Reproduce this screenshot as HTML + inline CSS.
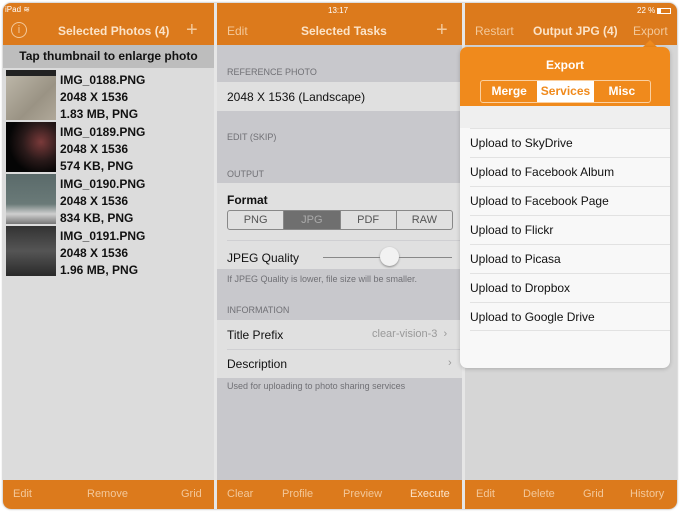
<!DOCTYPE html>
<html><head><meta charset="utf-8"><style>
*{margin:0;padding:0;box-sizing:border-box}
body{width:680px;height:512px;background:#fff;font-family:"Liberation Sans",Arial,sans-serif;position:relative;overflow:hidden}
.a{position:absolute}
.screen{left:3px;top:3px;width:674px;height:506px;border-radius:8px;overflow:hidden;background:#c8c8cc;box-shadow:0 0 2px #999}
.hdr{background:#dc7a1c;color:#fff}
.w{color:#f3c89a}
.t{font-size:12px;white-space:nowrap}
.sec{font-size:9px;color:#707075}
.cell{background:#e0e0e0}
.sep{height:1px;background:#cfcfd2}
.row{font-size:12px;color:#111;left:10px}
</style></head><body>
<div class="a screen">
 <div class="a" style="left:0;top:0;width:211px;height:506px;background:#dcdcdc"></div>
 <div class="a hdr" style="left:0;top:0;width:211px;height:42px"></div>
 <div class="a" style="left:211px;top:0;width:3px;height:506px;background:#e6e6e6"></div>
 <div class="a" style="left:459px;top:0;width:3px;height:506px;background:#e6e6e6"></div>
 <div class="a t" style="left:2px;top:2px;font-size:8px;color:#fff">iPad ︎≋</div>
 <div class="a" style="left:8px;top:19px;width:16px;height:16px;border:1px solid #f3c89a;border-radius:50%;color:#f3c89a;font-size:11px;text-align:center;line-height:14px">i</div>
 <div class="a t" style="left:55px;top:21px;font-weight:bold;color:#fbe3c8">Selected Photos (4)</div>
 <div class="a" style="left:183px;top:16px;color:#f3c89a;font-size:20px;font-weight:300">+</div>
 <div class="a" style="left:0;top:42px;width:211px;height:23px;background:#bdbdbd;font-size:12px;font-weight:bold;text-align:center;line-height:23px;color:#111">Tap thumbnail to enlarge photo</div>
 <div class="a" style="left:3px;top:67px;width:50px;height:50px;background:linear-gradient(135deg,#bcb6a8,#9a9384 60%,#b0a899);border-top:6px solid #222"></div>
 <div class="a" style="left:3px;top:119px;width:50px;height:50px;background:radial-gradient(circle at 70% 40%,#7a3a3a,#2a1a1a 40%,#050505 70%)"></div>
 <div class="a" style="left:3px;top:171px;width:50px;height:50px;background:linear-gradient(#5a6a6a,#6a7a78 60%,#cfcfcf 80%,#777)"></div>
 <div class="a" style="left:3px;top:223px;width:50px;height:50px;background:linear-gradient(#333,#555 50%,#2a2a2a)"></div>
 <div class="a" style="left:57px;top:69px;font-size:12px;font-weight:bold;line-height:17px;color:#111">
  <div style="height:52px">IMG_0188.PNG<br>2048 X 1536<br>1.83 MB, PNG</div>
  <div style="height:52px">IMG_0189.PNG<br>2048 X 1536<br>574 KB, PNG</div>
  <div style="height:52px">IMG_0190.PNG<br>2048 X 1536<br>834 KB, PNG</div>
  <div style="height:52px">IMG_0191.PNG<br>2048 X 1536<br>1.96 MB, PNG</div>
 </div>
 <div class="a hdr" style="left:0;top:477px;width:211px;height:29px"></div>
 <div class="a t w" style="left:10px;top:485px;font-size:11px">Edit</div>
 <div class="a t w" style="left:84px;top:485px;font-size:11px">Remove</div>
 <div class="a t w" style="left:178px;top:485px;font-size:11px">Grid</div>

 <div class="a hdr" style="left:214px;top:0;width:245px;height:42px"></div>
 <div class="a t" style="left:325px;top:3px;font-size:8px;color:#fff">13:17</div>
 <div class="a t w" style="left:224px;top:21px">Edit</div>
 <div class="a t" style="left:298px;top:21px;font-weight:bold;color:#fbe3c8">Selected Tasks</div>
 <div class="a" style="left:433px;top:16px;color:#f3c89a;font-size:20px">+</div>
 <div class="a sec" style="left:224px;top:64px">REFERENCE PHOTO</div>
 <div class="a cell" style="left:214px;top:79px;width:245px;height:29px"><div class="a row" style="top:8px">2048 X 1536 (Landscape)</div></div>
 <div class="a sec" style="left:224px;top:129px">EDIT (SKIP)</div>
 <div class="a sec" style="left:224px;top:166px">OUTPUT</div>
 <div class="a cell" style="left:214px;top:180px;width:245px;height:86px">
  <div class="a row" style="top:10px;font-weight:bold">Format</div>
  <div class="a" style="left:10px;top:27px;width:226px;height:20px;border:1px solid #888;border-radius:3px;display:flex;font-size:11px;color:#555;overflow:hidden">
   <div style="flex:1;text-align:center;line-height:18px;border-right:1px solid #888">PNG</div>
   <div style="flex:1;text-align:center;line-height:18px;background:#6f6f6f;color:#aaa;border-right:1px solid #888">JPG</div>
   <div style="flex:1;text-align:center;line-height:18px;border-right:1px solid #888">PDF</div>
   <div style="flex:1;text-align:center;line-height:18px">RAW</div>
  </div>
  <div class="a sep" style="left:10px;top:57px;width:235px"></div>
  <div class="a row" style="top:68px">JPEG Quality</div>
  <div class="a" style="left:106px;top:74px;width:129px;height:1px;background:#888"></div>
  <div class="a" style="left:163px;top:64px;width:19px;height:19px;border-radius:50%;background:#f2f2f2;box-shadow:0 1px 2px #888"></div>
 </div>
 <div class="a" style="left:224px;top:271px;font-size:9px;color:#707075">If JPEG Quality is lower, file size will be smaller.</div>
 <div class="a sec" style="left:224px;top:302px">INFORMATION</div>
 <div class="a cell" style="left:214px;top:317px;width:245px;height:58px">
  <div class="a row" style="top:8px">Title Prefix</div>
  <div class="a" style="left:155px;top:8px;font-size:11px;color:#999">clear-vision-3 &nbsp;›</div>
  <div class="a sep" style="left:10px;top:29px;width:235px"></div>
  <div class="a row" style="top:37px">Description</div>
  <div class="a" style="left:231px;top:37px;font-size:11px;color:#999">›</div>
 </div>
 <div class="a" style="left:224px;top:378px;font-size:9px;color:#707075">Used for uploading to photo sharing services</div>
 <div class="a hdr" style="left:214px;top:477px;width:245px;height:29px"></div>
 <div class="a t w" style="left:224px;top:485px;font-size:11px">Clear</div>
 <div class="a t w" style="left:279px;top:485px;font-size:11px">Profile</div>
 <div class="a t w" style="left:340px;top:485px;font-size:11px">Preview</div>
 <div class="a t" style="left:407px;top:485px;font-size:11px;color:#fbe3c8">Execute</div>

 <div class="a" style="left:462px;top:0;width:212px;height:506px;background:#d6d6d6"></div>
 <div class="a hdr" style="left:462px;top:0;width:212px;height:42px"></div>
 <div class="a t" style="left:634px;top:3px;font-size:8px;color:#fff">22 % <span style="display:inline-block;width:14px;height:6px;border:1px solid #fff;vertical-align:middle;background:linear-gradient(90deg,#fff 25%,transparent 25%)"></span></div>
 <div class="a t w" style="left:472px;top:21px">Restart</div>
 <div class="a t" style="left:530px;top:21px;font-weight:bold;color:#fbe3c8">Output JPG (4)</div>
 <div class="a t w" style="left:630px;top:21px">Export</div>
 <div class="a" style="left:640px;top:37px;width:0;height:0;border-left:7px solid transparent;border-right:7px solid transparent;border-bottom:7px solid #f08a1c"></div>
 <div class="a" style="left:457px;top:44px;width:210px;height:321px;border-radius:7px;overflow:hidden;background:#f8f8f8;box-shadow:0 1px 4px rgba(0,0,0,.2)">
  <div class="a" style="left:0;top:0;width:210px;height:59px;background:#f08a1c"></div>
  <div class="a t" style="left:0;width:210px;text-align:center;top:11px;color:#fff;font-weight:bold">Export</div>
  <div class="a" style="left:20px;top:33px;width:171px;height:23px;border:1px solid #fbd0a0;border-radius:3px;display:flex;font-size:12px;font-weight:bold;color:#fff;overflow:hidden">
   <div style="flex:1;text-align:center;line-height:21px">Merge</div>
   <div style="flex:1;text-align:center;line-height:21px;background:#fff;color:#f08a1c">Services</div>
   <div style="flex:1;text-align:center;line-height:21px">Misc</div>
  </div>
  <div class="a" style="left:0;top:59px;width:210px;height:22px;background:#efefef"></div>
  <div class="a" style="left:10px;top:81px;font-size:12px;color:#111;line-height:29px">
   <div style="height:29px;width:200px;border-top:1px solid #e2e2e2">Upload to SkyDrive</div>
   <div style="height:29px;width:200px;border-top:1px solid #e2e2e2">Upload to Facebook Album</div>
   <div style="height:29px;width:200px;border-top:1px solid #e2e2e2">Upload to Facebook Page</div>
   <div style="height:29px;width:200px;border-top:1px solid #e2e2e2">Upload to Flickr</div>
   <div style="height:29px;width:200px;border-top:1px solid #e2e2e2">Upload to Picasa</div>
   <div style="height:29px;width:200px;border-top:1px solid #e2e2e2">Upload to Dropbox</div>
   <div style="height:29px;width:200px;border-top:1px solid #e2e2e2;border-bottom:1px solid #e2e2e2">Upload to Google Drive</div>
  </div>
 </div>
 <div class="a hdr" style="left:462px;top:477px;width:212px;height:29px"></div>
 <div class="a t w" style="left:473px;top:485px;font-size:11px">Edit</div>
 <div class="a t w" style="left:520px;top:485px;font-size:11px">Delete</div>
 <div class="a t w" style="left:580px;top:485px;font-size:11px">Grid</div>
 <div class="a t w" style="left:627px;top:485px;font-size:11px">History</div>
</div>
</body></html>
